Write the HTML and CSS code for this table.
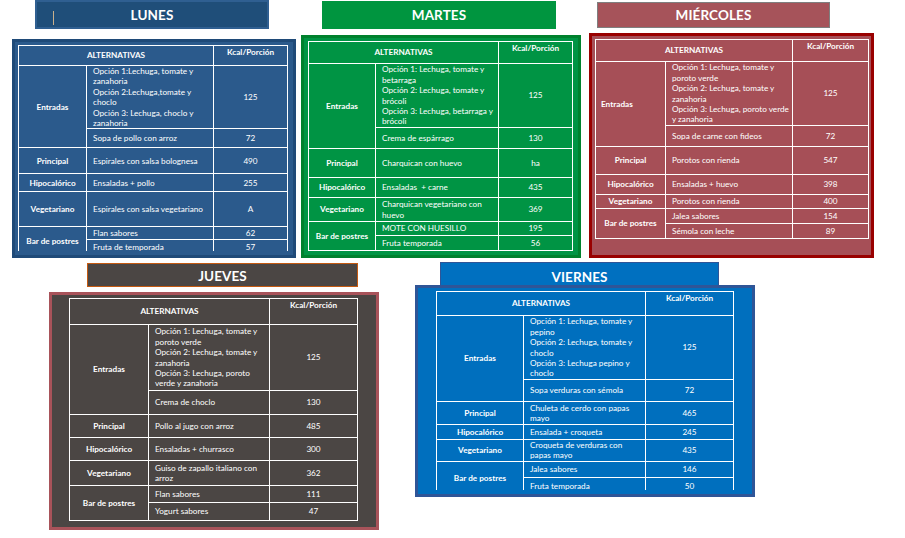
FILE: index.html
```html
<!DOCTYPE html>
<html lang="es">
<head>
<meta charset="utf-8">
<title>Menú semanal</title>
<link rel="stylesheet" href="styles.css">
</head>
<body>
<div class="canvas">

  <div class="day-title t-lunes"><span class="caret"></span>LUNES</div>
  <div class="day-box b-lunes">
    <div class="clip">
      <table class="menu">
        <colgroup><col class="c1"><col class="c2"><col class="c3"></colgroup>
        <tr class="r1"><th colspan="2">ALTERNATIVAS</th><th class="kcal">Kcal/Porción</th></tr>
        <tr class="r2"><th rowspan="2">Entradas</th><td class="txt">Opción 1:Lechuga, tomate y<br>zanahoria<br>Opción 2:Lechuga,tomate y<br>choclo<br>Opción 3: Lechuga, choclo y<br>zanahoria</td><td class="num">125</td></tr>
        <tr class="r3"><td class="txt">Sopa de pollo con arroz</td><td class="num">72</td></tr>
        <tr class="r4"><th>Principal</th><td class="txt">Espirales con salsa bolognesa</td><td class="num">490</td></tr>
        <tr class="r5"><th>Hipocalórico</th><td class="txt">Ensaladas + pollo</td><td class="num">255</td></tr>
        <tr class="r6"><th>Vegetariano</th><td class="txt">Espirales con salsa vegetariano</td><td class="num">A</td></tr>
        <tr class="r7"><th rowspan="2">Bar de postres</th><td class="txt">Flan sabores</td><td class="num">62</td></tr>
        <tr class="r8"><td class="txt">Fruta de temporada</td><td class="num">57</td></tr>
      </table>
    </div>
  </div>

  <div class="day-title t-martes">MARTES</div>
  <div class="day-box b-martes">
    <table class="menu">
      <colgroup><col class="c1"><col class="c2"><col class="c3"></colgroup>
      <tr class="r1"><th colspan="2">ALTERNATIVAS</th><th class="kcal">Kcal/Porción</th></tr>
      <tr class="r2"><th rowspan="2">Entradas</th><td class="txt">Opción 1: Lechuga, tomate y<br>betarraga<br>Opción 2: Lechuga, tomate y<br>brócoli<br>Opción 3: Lechuga, betarraga y<br>brócoli</td><td class="num">125</td></tr>
      <tr class="r3"><td class="txt">Crema de espárrago</td><td class="num">130</td></tr>
      <tr class="r4"><th>Principal</th><td class="txt">Charquican con huevo</td><td class="num">ha</td></tr>
      <tr class="r5"><th>Hipocalórico</th><td class="txt">Ensaladas &nbsp;+ carne</td><td class="num">435</td></tr>
      <tr class="r6"><th>Vegetariano</th><td class="txt">Charquican vegetariano con<br>huevo</td><td class="num">369</td></tr>
      <tr class="r7"><th rowspan="2">Bar de postres</th><td class="txt">MOTE CON HUESILLO</td><td class="num">195</td></tr>
      <tr class="r8"><td class="txt">Fruta temporada</td><td class="num">56</td></tr>
    </table>
  </div>

  <div class="day-title t-miercoles">MIÉRCOLES</div>
  <div class="day-box b-miercoles">
    <table class="menu">
      <colgroup><col class="c1"><col class="c2"><col class="c3"></colgroup>
      <tr class="r1"><th colspan="2">ALTERNATIVAS</th><th class="kcal">Kcal/Porción</th></tr>
      <tr class="r2"><th rowspan="2" class="left">Entradas</th><td class="txt">Opción 1: Lechuga, tomate y<br>poroto verde<br>Opción 2: Lechuga, tomate y<br>zanahoria<br>Opción 3: Lechuga, poroto verde<br>y zanahoria</td><td class="num">125</td></tr>
      <tr class="r3"><td class="txt">Sopa de carne con fideos</td><td class="num">72</td></tr>
      <tr class="r4"><th>Principal</th><td class="txt">Porotos con rienda</td><td class="num">547</td></tr>
      <tr class="r5"><th>Hipocalórico</th><td class="txt">Ensaladas + huevo</td><td class="num">398</td></tr>
      <tr class="r6"><th>Vegetariano</th><td class="txt">Porotos con rienda</td><td class="num">400</td></tr>
      <tr class="r7"><th rowspan="2">Bar de postres</th><td class="txt">Jalea sabores</td><td class="num">154</td></tr>
      <tr class="r8"><td class="txt">Sémola con leche</td><td class="num">89</td></tr>
    </table>
  </div>

  <div class="day-title t-jueves">JUEVES</div>
  <div class="day-box b-jueves">
    <table class="menu">
      <colgroup><col class="c1"><col class="c2"><col class="c3"></colgroup>
      <tr class="r1"><th colspan="2">ALTERNATIVAS</th><th class="kcal">Kcal/Porción</th></tr>
      <tr class="r2"><th rowspan="2">Entradas</th><td class="txt">Opción 1: Lechuga, tomate y<br>poroto verde<br>Opción 2: Lechuga, tomate y<br>zanahoria<br>Opción 3: Lechuga, poroto<br>verde y zanahoria</td><td class="num">125</td></tr>
      <tr class="r3"><td class="txt">Crema de choclo</td><td class="num">130</td></tr>
      <tr class="r4"><th>Principal</th><td class="txt">Pollo al jugo con arroz</td><td class="num">485</td></tr>
      <tr class="r5"><th>Hipocalórico</th><td class="txt">Ensaladas + churrasco</td><td class="num">300</td></tr>
      <tr class="r6"><th>Vegetariano</th><td class="txt">Guiso de zapallo italiano con<br>arroz</td><td class="num">362</td></tr>
      <tr class="r7"><th rowspan="2">Bar de postres</th><td class="txt">Flan sabores</td><td class="num">111</td></tr>
      <tr class="r8"><td class="txt">Yogurt sabores</td><td class="num">47</td></tr>
    </table>
  </div>

  <div class="day-title t-viernes">VIERNES</div>
  <div class="day-box b-viernes">
    <div class="clip">
      <table class="menu">
        <colgroup><col class="c1"><col class="c2"><col class="c3"></colgroup>
        <tr class="r1"><th colspan="2">ALTERNATIVAS</th><th class="kcal">Kcal/Porción</th></tr>
        <tr class="r2"><th rowspan="2">Entradas</th><td class="txt">Opción 1: Lechuga, tomate y<br>pepino<br>Opción 2: Lechuga, tomate y<br>choclo<br>Opción 3: Lechuga pepino y<br>choclo</td><td class="num">125</td></tr>
        <tr class="r3"><td class="txt">Sopa verduras con sémola</td><td class="num">72</td></tr>
        <tr class="r4"><th>Principal</th><td class="txt">Chuleta de cerdo con papas<br>mayo</td><td class="num">465</td></tr>
        <tr class="r5"><th>Hipocalórico</th><td class="txt">Ensalada + croqueta</td><td class="num">245</td></tr>
        <tr class="r6"><th>Vegetariano</th><td class="txt">Croqueta de verduras con<br>papas mayo</td><td class="num">435</td></tr>
        <tr class="r7"><th rowspan="2">Bar de postres</th><td class="txt">Jalea sabores</td><td class="num">146</td></tr>
        <tr class="r8"><td class="txt">Fruta temporada</td><td class="num">50</td></tr>
      </table>
    </div>
  </div>

</div>
</body>
</html>
```

FILE: styles.css
```css
html, body {
  margin: 0;
  padding: 0;
  background: #ffffff;
}
body {
  width: 905px;
  height: 538px;
  overflow: hidden;
  font-family: Lato, "Open Sans", "Liberation Sans", sans-serif;
}
.canvas {
  position: relative;
  width: 905px;
  height: 538px;
}

/* ---------- day titles ---------- */
.day-title {
  position: absolute;
  box-sizing: border-box;
  display: flex;
  align-items: center;
  justify-content: center;
  color: #ffffff;
  font-weight: 700;
  font-size: 13.5px;
  letter-spacing: 0.1px;
}
.caret {
  position: absolute;
  left: 16px;
  top: 9px;
  width: 1px;
  height: 14px;
  background: #c9b08c;
}
.t-lunes {
  left: 35px; top: 0; width: 234px; height: 29px;
  background: #1f4e79;
  border: 2px solid #2f5f91;
}
.t-martes {
  left: 322px; top: 1px; width: 234px; height: 28px;
  background: #00953f;
}
.t-miercoles {
  left: 597px; top: 2px; width: 233px; height: 26px;
  background: #a6535a;
  border: 1px solid #7f7f7f;
}
.t-jueves {
  left: 87px; top: 263px; width: 271px; height: 24px;
  background: #4b4644;
  border: 1px solid #c55a11;
  padding-top: 1px;
}
.t-viernes {
  left: 440px; top: 262px; width: 279px; height: 24px;
  background: #0070c0;
  border: 1px solid #2f5597;
  border-bottom: 0;
  padding-top: 4px;
}

/* ---------- day boxes ---------- */
.day-box {
  position: absolute;
  box-sizing: border-box;
  border: 3px solid;
  padding-top: 3px;
}
.b-lunes {
  left: 12px; top: 39px; width: 284px; height: 219px;
  background: #2b5a8c; border-color: #1f4a78;
  padding-left: 3px;
}
.b-martes {
  left: 301px; top: 35px; width: 280px; height: 223px;
  background: #009444; border-color: #00812d;
  padding-left: 4px;
}
.b-miercoles {
  left: 589px; top: 33px; width: 285px; height: 225px;
  background: #a64f57; border-color: #990000;
  padding-left: 3px;
}
.b-jueves {
  left: 49px; top: 292px; width: 330px; height: 238px;
  background: #4b4644; border-color: #a8535a;
  padding-left: 17px;
}
.b-viernes {
  left: 415px; top: 285px; width: 340px; height: 212px;
  background: #006fbe; border-color: #2f5597;
  padding-left: 18px;
}

.clip { overflow: hidden; }
.b-lunes .clip { height: 206px; }
.b-viernes .clip { height: 199px; }

/* ---------- tables ---------- */
.menu {
  border-collapse: collapse;
  table-layout: fixed;
  color: #ffffff;
  font-size: 8.2px;
  line-height: 10.4px;
}
.menu th, .menu td {
  border: 1px solid #ffffff;
  padding: 0;
  vertical-align: middle;
}
.menu th {
  font-weight: 700;
  text-align: center;
}
.menu th.left {
  text-align: left;
  padding-left: 5px;
}
.menu th.kcal {
  vertical-align: top;
  padding-top: 1px;
}
.menu td.txt {
  text-align: left;
  padding-left: 6px;
  white-space: nowrap;
  overflow: hidden;
}
.menu td.num {
  text-align: center;
}

/* Lunes */
.b-lunes .menu { width: 269px; }
.b-lunes .c1 { width: 68px; }
.b-lunes .c2 { width: 127px; }
.b-lunes .c3 { width: 74px; }
.b-lunes .r1 { height: 20px; }
.b-lunes .r2 { height: 62px; }
.b-lunes .r3 { height: 19px; }
.b-lunes .r4 { height: 26px; }
.b-lunes .r5 { height: 18px; }
.b-lunes .r6 { height: 35px; }
.b-lunes .r7 { height: 13px; }
.b-lunes .r8 { height: 15px; }

/* Martes */
.b-martes .menu { width: 264px; }
.b-martes .c1 { width: 67px; }
.b-martes .c2 { width: 123px; }
.b-martes .c3 { width: 74px; }
.b-martes .r1 { height: 22px; }
.b-martes .r2 { height: 64px; }
.b-martes .r3 { height: 21px; }
.b-martes .r4 { height: 29px; }
.b-martes .r5 { height: 20px; }
.b-martes .r6 { height: 24px; }
.b-martes .r7 { height: 14px; }
.b-martes .r8 { height: 15px; }

/* Miércoles */
.b-miercoles .menu { width: 273px; }
.b-miercoles .c1 { width: 70px; }
.b-miercoles .c2 { width: 127px; }
.b-miercoles .c3 { width: 76px; }
.b-miercoles .r1 { height: 22px; }
.b-miercoles .r2 { height: 64px; }
.b-miercoles .r3 { height: 21px; }
.b-miercoles .r4 { height: 28px; }
.b-miercoles .r5 { height: 20px; }
.b-miercoles .r6 { height: 14px; }
.b-miercoles .r7 { height: 15px; }
.b-miercoles .r8 { height: 15px; }

/* Jueves */
.b-jueves .menu { width: 288px; }
.b-jueves .c1 { width: 79px; }
.b-jueves .c2 { width: 121px; }
.b-jueves .c3 { width: 88px; }
.b-jueves .r1 { height: 26px; }
.b-jueves .r2 { height: 66px; }
.b-jueves .r3 { height: 24px; }
.b-jueves .r4 { height: 23px; }
.b-jueves .r5 { height: 23px; }
.b-jueves .r6 { height: 25px; }
.b-jueves .r7 { height: 17px; }
.b-jueves .r8 { height: 18px; }

/* Viernes */
.b-viernes .menu { width: 297px; }
.b-viernes .c1 { width: 87px; }
.b-viernes .c2 { width: 122px; }
.b-viernes .c3 { width: 88px; }
.b-viernes .r1 { height: 24px; }
.b-viernes .r2 { height: 64px; }
.b-viernes .r3 { height: 22px; }
.b-viernes .r4 { height: 23px; }
.b-viernes .r5 { height: 15px; }
.b-viernes .r6 { height: 20px; }
.b-viernes .r7 { height: 16px; }
.b-viernes .r8 { height: 17px; }
```
